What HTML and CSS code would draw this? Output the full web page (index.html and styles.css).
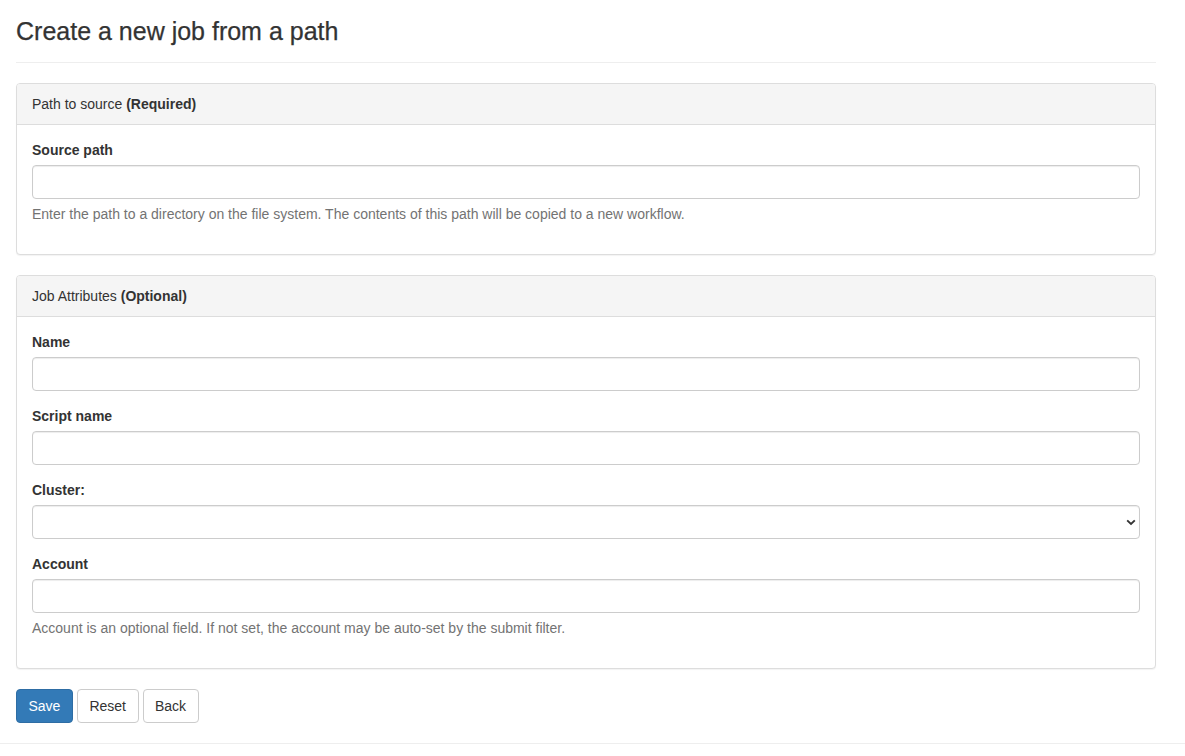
FILE: index.html
```html
<!DOCTYPE html>
<html>
<head>
<meta charset="utf-8">
<title>Create a new job from a path</title>
<link rel="stylesheet" href="styles.css">
</head>
<body>
<div class="container">
  <div class="page-header">
    <h3>Create a new job from a path</h3>
  </div>
  <form class="job-form">
    <div class="panel">
      <div class="panel-heading">Path to source <strong>(Required)</strong></div>
      <div class="panel-body">
        <div class="form-group">
          <label class="control-label">Source path</label>
          <input class="form-control" type="text">
          <p class="help-block">Enter the path to a directory on the file system. The contents of this path will be copied to a new workflow.</p>
        </div>
      </div>
    </div>
    <div class="panel">
      <div class="panel-heading">Job Attributes <strong>(Optional)</strong></div>
      <div class="panel-body">
        <div class="form-group">
          <label class="control-label">Name</label>
          <input class="form-control" type="text">
        </div>
        <div class="form-group">
          <label class="control-label">Script name</label>
          <input class="form-control" type="text">
        </div>
        <div class="form-group">
          <label class="control-label">Cluster:</label>
          <div class="select-wrap">
            <select class="form-control select"><option></option></select>
            <svg class="chevron" width="10" height="7" viewBox="0 0 10 7"><path d="M1.2 1.4 L5 5 L8.8 1.4" fill="none" stroke="#333" stroke-width="1.9"/></svg>
          </div>
        </div>
        <div class="form-group">
          <label class="control-label">Account</label>
          <input class="form-control" type="text">
          <p class="help-block">Account is an optional field. If not set, the account may be auto-set by the submit filter.</p>
        </div>
      </div>
    </div>
    <div class="actions">
      <button type="button" class="btn btn-primary">Save</button>
      <button type="button" class="btn btn-default">Reset</button>
      <button type="button" class="btn btn-default">Back</button>
    </div>
  </form>
</div>
<footer class="footer"></footer>
</body>
</html>
```

FILE: styles.css
```css
* { box-sizing: border-box; }
html, body { margin: 0; padding: 0; }
body {
  font-family: "Liberation Sans", Arial, Helvetica, sans-serif;
  font-size: 14px;
  line-height: 20px;
  color: #333;
  background: #fff;
}
.container {
  width: 1172px;
  padding: 0 16px;
}
.page-header {
  padding: 17px 0 8px;
  border-bottom: 1px solid #eee;
  margin-bottom: 20px;
}
.page-header h3 {
  margin: 0 0 9px;
  font-size: 25px;
  font-weight: 500;
  line-height: 28px;
  color: #333;
  -webkit-text-stroke: 0.25px #333;
}
.job-form { margin: 0; }
.panel {
  border: 1px solid #ddd;
  border-radius: 4px;
  margin-bottom: 20px;
  background: #fff;
  box-shadow: 0 1px 1px rgba(0,0,0,0.05);
}
.panel-heading {
  background: #f5f5f5;
  border-bottom: 1px solid #ddd;
  padding: 10px 15px;
  border-radius: 3px 3px 0 0;
}
.panel-body { padding: 15px; }
.form-group { margin-bottom: 15px; }
.control-label {
  display: block;
  font-weight: bold;
  margin-bottom: 5px;
}
.form-control {
  display: block;
  width: 100%;
  height: 34px;
  padding: 6px 12px;
  font: inherit;
  color: #555;
  background: #fff;
  border: 1px solid #ccc;
  border-radius: 4px;
  box-shadow: inset 0 1px 1px rgba(0,0,0,0.075);
  margin: 0;
}
.select-wrap { position: relative; }
.select { appearance: none; -webkit-appearance: none; }
.chevron { position: absolute; right: 4px; top: 14px; }
.help-block {
  display: block;
  margin: 5px 0 0;
  color: #737373;
}
.actions {
  display: flex;
  gap: 4px;
}
.btn {
  display: inline-block;
  height: 34px;
  padding: 6px 11.5px;
  font: inherit;
  border: 1px solid transparent;
  border-radius: 4px;
  cursor: pointer;
  margin: 0;
}
.btn-primary { background: #337ab7; border-color: #2e6da4; color: #fff; }
.btn-default { background: #fff; border-color: #ccc; color: #333; }
.footer {
  margin-top: 20px;
  border-top: 1px solid #eee;
  height: 12px;
}
```
